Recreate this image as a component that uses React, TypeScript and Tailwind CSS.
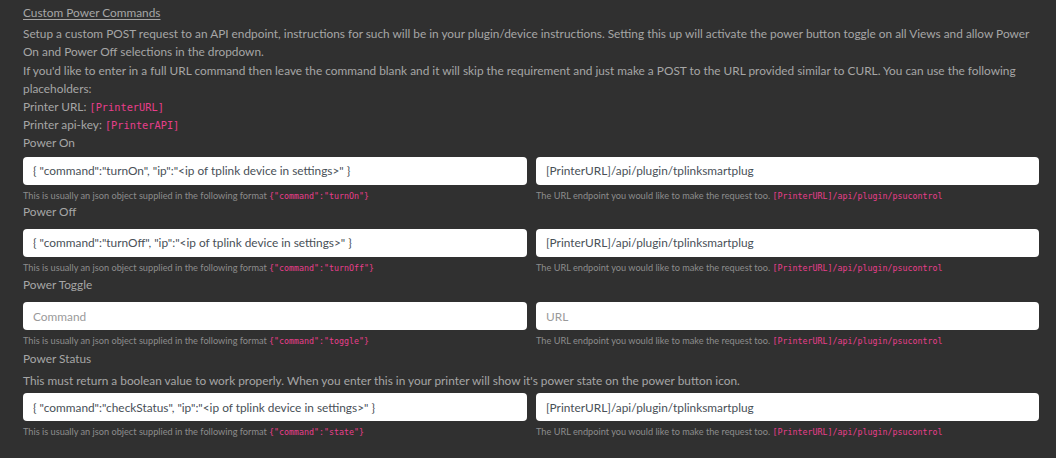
import React from "react";

const Code = ({ children, size = "small" }: { children: React.ReactNode; size?: "small" | "text" }) => (
  <code
    className={
      size === "small"
        ? "text-[#e83e8c] text-[8.3px] font-['DejaVu_Sans_Mono',monospace]"
        : "text-[#e83e8c] text-[10.3px] font-['DejaVu_Sans_Mono',monospace]"
    }
  >
    {children}
  </code>
);

const Field = ({
  value,
  placeholder,
  help,
  code,
}: {
  value?: string;
  placeholder: string;
  help: string;
  code: string;
}) => (
  <div className="flex flex-col">
    <input
      readOnly
      defaultValue={value}
      placeholder={placeholder}
      className="h-[28px] w-full rounded-[4px] bg-white px-[10px] text-[11.85px] text-[#495057] placeholder:text-[#9a9a9a] outline-none"
    />
    <div className="mt-[4px] h-[14px] leading-[14px] text-[9.2px] text-[#8c8c8c] whitespace-nowrap">
      {help} <Code>{code}</Code>
    </div>
  </div>
);

const Row = ({
  cmd,
  cmdCode,
  url,
}: {
  cmd?: string;
  cmdCode: string;
  url?: string;
}) => (
  <div className="grid grid-cols-[504px_503px] gap-[9px]">
    <Field
      value={cmd}
      placeholder="Command"
      help="This is usually an json object supplied in the following format"
      code={cmdCode}
    />
    <Field
      value={url}
      placeholder="URL"
      help="The URL endpoint you would like to make the request too."
      code="[PrinterURL]/api/plugin/psucontrol"
    />
  </div>
);

export default function App() {
  return (
    <div className="min-h-[458px] w-[1056px] bg-[#303030] pl-[23px] pt-[4px] font-['Lato',sans-serif] text-[11.85px] leading-[18.2px] text-[#a6a6a6]">
      <div className="underline underline-offset-2">Custom Power Commands</div>
      <div className="mt-[3px] pr-[17px]">
        <p>
          Setup a custom POST request to an API endpoint, instructions for such will be in your plugin/device
          instructions. Setting this up will activate the power button toggle on all Views and allow Power On and
          Power Off selections in the dropdown.
        </p>
        <p>
          If you'd like to enter in a full URL command then leave the command blank and it will skip the requirement
          and just make a POST to the URL provided similar to CURL. You can use the following placeholders:
        </p>
        <p>
          Printer URL: <Code size="text">[PrinterURL]</Code>
        </p>
        <p>
          Printer api-key: <Code size="text">[PrinterAPI]</Code>
        </p>
      </div>
      <div>Power On</div>
      <div className="mt-[4px]">
        <Row
          cmd={'{ "command":"turnOn", "ip":"<ip of tplink device in settings>" }'}
          cmdCode={'{"command":"turnOn"}'}
          url="[PrinterURL]/api/plugin/tplinksmartplug"
        />
      </div>
      <div>Power Off</div>
      <div className="mt-[8px]">
        <Row
          cmd={'{ "command":"turnOff", "ip":"<ip of tplink device in settings>" }'}
          cmdCode={'{"command":"turnOff"}'}
          url="[PrinterURL]/api/plugin/tplinksmartplug"
        />
      </div>
      <div className="mt-[1px]">Power Toggle</div>
      <div className="mt-[8px]">
        <Row cmdCode={'{"command":"toggle"}'} />
      </div>
      <div className="mt-[2px]">Power Status</div>
      <div className="mt-[4px]">
        This must return a boolean value to work properly. When you enter this in your printer will show it's power
        state on the power button icon.
      </div>
      <div className="mt-[3px] pb-[18px]">
        <Row
          cmd={'{ "command":"checkStatus", "ip":"<ip of tplink device in settings>" }'}
          cmdCode={'{"command":"state"}'}
          url="[PrinterURL]/api/plugin/tplinksmartplug"
        />
      </div>
    </div>
  );
}
